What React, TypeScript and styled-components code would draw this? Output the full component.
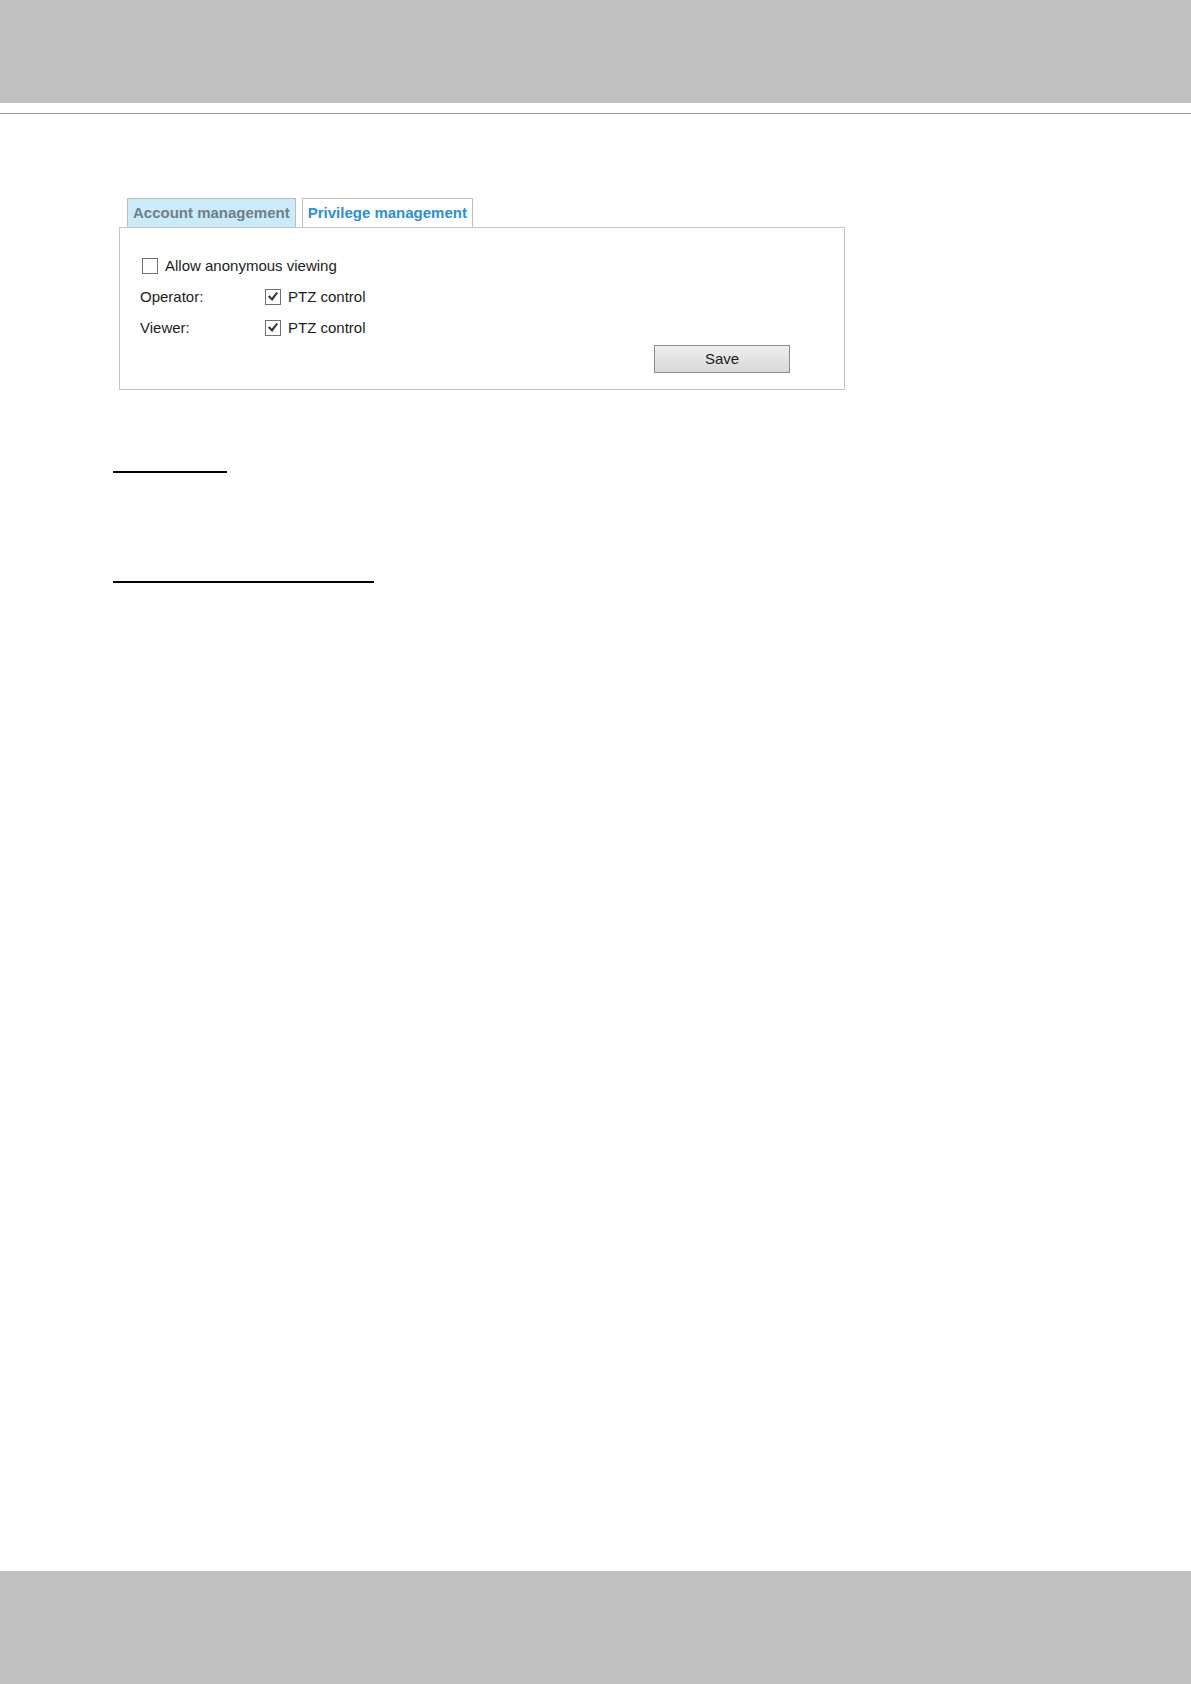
import { useState } from "react";
import styled, { createGlobalStyle } from "styled-components";

const GlobalStyle = createGlobalStyle`
  * { box-sizing: border-box; }
  body {
    margin: 0;
    background: #ffffff;
    color: #1c1c1c;
    font-family: "Liberation Sans", Arial, sans-serif;
    font-size: 15px;
    line-height: 18px;
  }
`;

const Page = styled.div`
  display: flex;
  flex-direction: column;
  min-height: 100vh;
`;

const HeaderBand = styled.header`
  height: 103px;
  background: #c0c0c0;
`;

const FooterBand = styled.footer`
  height: 113px;
  background: #c0c0c0;
`;

const HeaderRule = styled.hr`
  width: 100%;
  margin: 10px 0 0;
  border: 0;
  border-top: 1px solid #999999;
`;

const Content = styled.main`
  flex: 1;
  padding: 84px 113px 0;
`;

const Settings = styled.section`
  max-width: 732px;
  padding-left: 6px;
`;

const Tabs = styled.div`
  display: flex;
  gap: 6px;
  padding-left: 8px;
`;

const Tab = styled.button<{ $active: boolean }>`
  height: 29px;
  padding: 0 5px 1px;
  border: 1px solid #bdbdbd;
  border-bottom: 0;
  background: ${(p) => (p.$active ? "#ffffff" : "#cbeafa")};
  color: ${(p) => (p.$active ? "#2b8fd3" : "#6e7f86")};
  font: inherit;
  font-weight: bold;
`;

const Panel = styled.form`
  padding: 22px 54px 16px 20px;
  border: 1px solid #c4c4c4;
`;

const Row = styled.div`
  display: flex;
  align-items: center;
  height: 31px;
`;

const Role = styled.span`
  width: 123px;
`;

const Option = styled.label`
  display: flex;
  align-items: center;
  gap: 7px;
  padding-left: 2px;
`;

const Checkbox = styled.input`
  appearance: none;
  width: 16px;
  height: 16px;
  margin: 0;
  border: 1px solid #707070;
  background: #ffffff;

  &:checked {
    display: grid;
    place-items: center;
  }

  &:checked::before {
    content: "";
    width: 10px;
    height: 10px;
    background: #333333;
    clip-path: polygon(0 52%, 16% 38%, 38% 63%, 84% 4%, 100% 16%, 42% 96%);
  }
`;

const Actions = styled.div`
  display: flex;
  justify-content: flex-end;
  padding-top: 2px;
`;

const SaveButton = styled.button`
  width: 136px;
  height: 28px;
  padding: 0;
  border: 1px solid #8c8c8c;
  background: linear-gradient(#efefef, #d8d8d8);
  color: inherit;
  font: inherit;
`;

const SectionRule = styled.hr<{ $width: number; $gap: number }>`
  width: ${(p) => p.$width}px;
  margin: ${(p) => p.$gap}px 0 0;
  border: 0;
  border-top: 2px solid #000000;
`;

const tabs = ["Account management", "Privilege management"];
const roles = ["Operator", "Viewer"];

export default function App() {
  const [active, setActive] = useState(tabs[1]);

  return (
    <Page>
      <GlobalStyle />
      <HeaderBand />
      <HeaderRule />
      <Content>
        <Settings>
          <Tabs role="tablist">
            {tabs.map((name) => (
              <Tab
                key={name}
                type="button"
                role="tab"
                aria-selected={name === active}
                $active={name === active}
                onClick={() => setActive(name)}
              >
                {name}
              </Tab>
            ))}
          </Tabs>
          <Panel onSubmit={(e) => e.preventDefault()}>
            <Row>
              <Option htmlFor="anonymous">
                <Checkbox type="checkbox" id="anonymous" />
                Allow anonymous viewing
              </Option>
            </Row>
            {roles.map((role) => (
              <Row key={role}>
                <Role id={`${role}-name`}>{role}:</Role>
                <Option htmlFor={`${role}-ptz`}>
                  <Checkbox
                    type="checkbox"
                    id={`${role}-ptz`}
                    aria-describedby={`${role}-name`}
                    defaultChecked
                  />
                  PTZ control
                </Option>
              </Row>
            ))}
            <Actions>
              <SaveButton type="submit">Save</SaveButton>
            </Actions>
          </Panel>
        </Settings>
        <SectionRule $width={114} $gap={81} />
        <SectionRule $width={261} $gap={108} />
      </Content>
      <FooterBand />
    </Page>
  );
}
